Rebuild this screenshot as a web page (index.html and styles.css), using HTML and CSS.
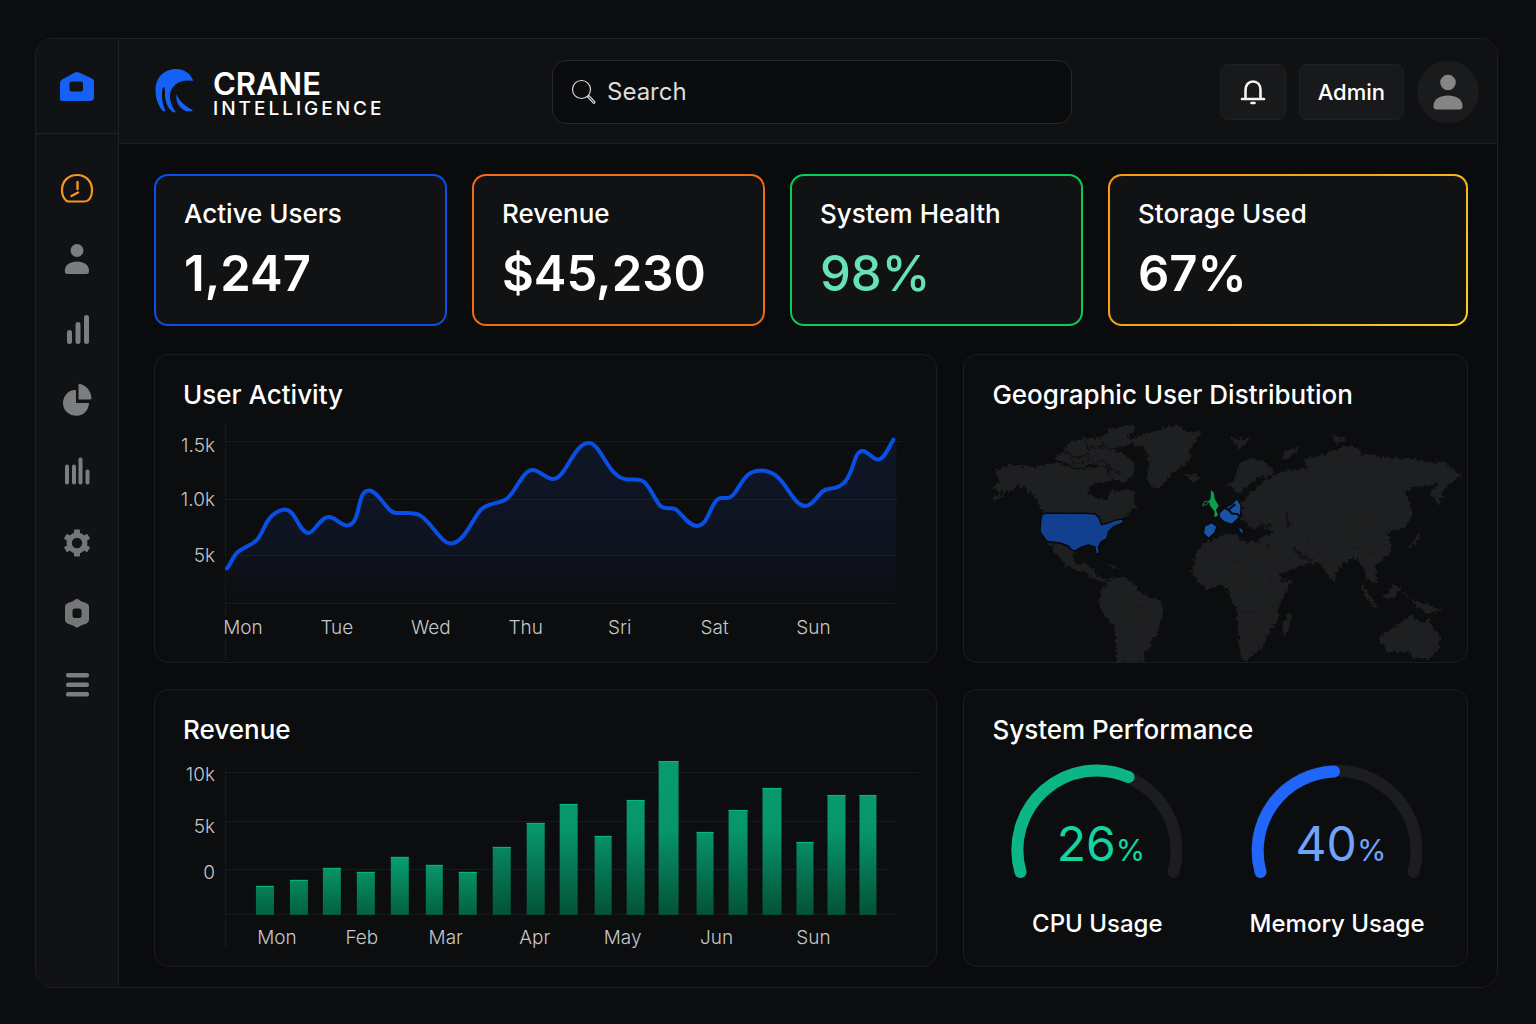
FILE: index.html
```html
<!DOCTYPE html>
<html lang="en">
<head>
<meta charset="utf-8">
<meta name="viewport" content="width=device-width, initial-scale=1">
<title>Crane Intelligence</title>
<link rel="stylesheet" href="styles.css">
</head>
<body>
<div class="shell">
  <aside class="sidebar">
    <a class="home" href="#" aria-label="Home">
      <svg width="36" height="32" viewBox="0 0 36 32"><path fill="#1560f5" fill-rule="evenodd" d="M1 13Q1 10.500 3 9.500L16 2.500Q18 1.500 20 2.500L33 8.500Q35 9.500 35 11.500V27Q35 31 31 31H3Q1 31 1 29ZM12.500 11.500Q10.500 11.500 10.500 13.500V19.500Q10.500 21.500 12.500 21.500H22Q24 21.500 24 19.500V13.500Q24 11.500 22 11.500Z"/></svg>
    </a>
    <nav class="nav" aria-label="Main">
      <a class="active" href="#" aria-label="Dashboard"><svg width="36" height="36" viewBox="0 0 36 36" fill="none" stroke="#f7931e" stroke-width="2.200" stroke-linecap="round" stroke-linejoin="round"><path d="M7.500 31Q3 27 3 20C3 11 9.500 5 18 5S33 11 33 20Q33 27 29.500 30Q28 31.500 25 31.500H11Q8.500 31.500 7.500 31Z"/><path d="M18.500 12V19M19 22.500L12.500 26" stroke-width="2.400"/></svg></a>
      <a href="#" aria-label="Users"><svg width="36" height="36" viewBox="0 0 36 36" fill="#7b7d7e"><circle cx="18" cy="9.500" r="6.500"/><path d="M5.800 30C5.800 24 11 20.500 18 20.500S30 24 30 30Q30 33 27.500 33H8.500Q5.800 33 5.800 30Z"/></svg></a>
      <a href="#" aria-label="Statistics"><svg width="36" height="36" viewBox="0 0 36 36" fill="#7b7d7e"><rect x="8" y="18" width="5" height="14" rx="2.500"/><rect x="16.500" y="10" width="5" height="22" rx="2.500"/><rect x="25" y="3" width="5" height="29" rx="2.500"/></svg></a>
      <a href="#" aria-label="Segments"><svg width="36" height="36" viewBox="0 0 36 36" fill="#7b7d7e"><path d="M17 7.500V20H30A13 13 0 1 1 15 7Q17 6.800 17 7.500Z"/><path d="M19.500 2Q19.500 .5 21 .8Q31 4 32.500 14.500Q33 16.500 31 16.500H19.500Z"/></svg></a>
      <a href="#" aria-label="Reports"><svg width="36" height="36" viewBox="0 0 36 36" fill="#7b7d7e"><rect x="6" y="10.500" width="4" height="20" rx="2"/><rect x="13" y="10.500" width="4" height="20" rx="2"/><rect x="19.500" y="3.500" width="4" height="27" rx="2"/><rect x="26.500" y="15.500" width="4" height="15" rx="2"/></svg></a>
      <a href="#" aria-label="Settings"><svg width="36" height="36" viewBox="0 0 36 36"><g fill="#747677"><circle cx="18" cy="18" r="10.500"/><rect x="15" y="4.500" width="6" height="27" rx="1"/><rect x="15" y="4.500" width="6" height="27" rx="1" transform="rotate(60 18 18)"/><rect x="15" y="4.500" width="6" height="27" rx="1" transform="rotate(120 18 18)"/></g><circle cx="18" cy="18" r="5.200" fill="#111315"/></svg></a>
      <a href="#" aria-label="Security"><svg width="36" height="36" viewBox="0 0 36 36"><path fill="#747677" fill-rule="evenodd" d="M16.500 3.300Q18 2.500 19.500 3.300L22 5.300L27 7Q30 8.200 30 11V23.500Q30 26.500 27 27.800L22 29.500L19.500 31Q18 32 16.500 31L14 29.500L9 27.800Q6 26.500 6 23.500V11Q6 8.200 9 7L14 5.300ZM16 12.500Q13.500 12.500 13.500 15V19.500Q13.500 22 16 22H20Q22.500 22 22.500 19.500V15Q22.500 12.500 20 12.500Z"/></svg></a>
      <a href="#" aria-label="Menu"><svg width="36" height="36" viewBox="0 0 36 36" fill="#7b7d7e"><rect x="7" y="6" width="23" height="4.500" rx="2"/><rect x="7" y="15.500" width="23" height="4.500" rx="2"/><rect x="7" y="25" width="23" height="4.500" rx="2"/></svg></a>
    </nav>
  </aside>

  <div class="main">
    <header class="topbar">
      <a class="brand" href="#">
        <svg width="40" height="50" viewBox="0 0 40 50"><path fill="#1560f5" d="M39.300 13.700C36 6 30 2 22 2C10 2 1.500 11 1.500 23C1.500 32 4.500 39 9 44.300H11.500C9 39 7.800 32 8 26Q8.300 19.500 10 20Q11 21 11 27C11 35 14 41.500 19 45.300H22C18 40 15.500 34 16 27.500C17 19.500 24 13.500 34 13.500ZM22.500 27C25 34 31 39 38.500 43V44.300H32C26 41.500 21.300 36 22.500 27Z"/></svg>
        <span class="brand-text"><span class="brand-name">CRANE</span><span class="brand-sub">INTELLIGENCE</span></span>
      </a>
      <label class="search">
        <svg width="26" height="26" viewBox="0 0 26 26" fill="none" stroke="#d8d9da" stroke-width="1.200"><circle cx="10.500" cy="10.500" r="9"/><path d="M16.500 17.800L22.500 24.200Q24 24.500 23.800 22.800L18 16.500Z"/></svg>
        <input type="search" placeholder="Search" aria-label="Search">
      </label>
      <div class="actions">
        <button class="btn bell" type="button" aria-label="Notifications">
          <svg width="28" height="28" viewBox="0 0 28 28" fill="none" stroke="#f4f4f4" stroke-width="2.600" stroke-linecap="round"><path d="M6.500 21V12C6.500 7 9.500 3.500 14 3.500S21.500 7 21.500 12V21M3 21H25"/><path d="M12.500 25H15.500" stroke-width="2.600"/></svg>
        </button>
        <button class="btn" type="button">Admin</button>
        <button class="avatar" type="button" aria-label="Profile">
          <svg width="36" height="40" viewBox="0 0 36 40" fill="#858585"><circle cx="18" cy="10.500" r="7.800"/><path d="M3.500 34C3.500 27 10 23.500 18 23.500S32.500 27 32.500 34Q32.500 37.500 29.500 37.500H6.500Q3.500 37.500 3.500 34Z"/></svg>
        </button>
      </div>
    </header>

    <main class="content">
      <section class="stats">
        <article class="stat blue"><h2>Active Users</h2><p>1,247</p></article>
        <article class="stat orange"><h2>Revenue</h2><p>$45,230</p></article>
        <article class="stat green"><h2>System Health</h2><p>98%</p></article>
        <article class="stat yellow"><h2>Storage Used</h2><p>67%</p></article>
      </section>

      <section class="panels">
        <article class="panel">
          <h2>User Activity</h2>
          <svg class="chart" viewBox="155 411 782 251" role="img" aria-label="User activity by day">
            <defs><linearGradient id="area" x1="0" y1="440" x2="0" y2="603" gradientUnits="userSpaceOnUse"><stop offset="0" stop-color="#1b3d8c" stop-opacity=".18"/><stop offset=".65" stop-color="#1b3d8c" stop-opacity=".14"/><stop offset="1" stop-color="#1b3d8c" stop-opacity="0"/></linearGradient></defs>
            <path class="grid-line" d="M225.500 424V617M225.500 640V661M226 441.500H902M226 499.500H898M226 555.500H897M226 603.500H896"/>
            <path fill="url(#area)" d="M227 568.500C231 564 233 556 238 552C244 547 251 546 257 540C264 532 265 521 273 515C277 512 280 509.500 285 509.500C296 509.500 299 533 308.500 533C315 533 320 517 329 517C336 517 340 525.500 347 525.500C362 525.500 356 490.500 369 490.500C379 490.500 387 513 396 513C405 514 414 511 421 516C433 524 441 543.500 451 543.500C465 543.500 473 517 482 509C490 502 498 505 507 499C516 492 523 470 533 470C540 470 546 479 553.500 479C566 479 574 443 589 443C602 443 608 479 628 479.500C638 480 643 477 650 489C656 498 659 508 666 508C670 509 673 507 677 510C683 515 689 526 697.500 526C710 526 711 498 722 498C729 498 731 499 736 492C744 480 747 470.500 762 470.500C786 470.500 791 506 806 506C815 506 820 489 829 489C838 488 843 486 847 480C855 468 855 451 863 451C869 451 873 460 879 459.500C885 459 889 448 894 439.500L897 439.500V603H227Z"/>
            <path fill="none" stroke="#0a4fe3" stroke-width="4" stroke-linecap="round" d="M227 568.500C231 564 233 556 238 552C244 547 251 546 257 540C264 532 265 521 273 515C277 512 280 509.500 285 509.500C296 509.500 299 533 308.500 533C315 533 320 517 329 517C336 517 340 525.500 347 525.500C362 525.500 356 490.500 369 490.500C379 490.500 387 513 396 513C405 514 414 511 421 516C433 524 441 543.500 451 543.500C465 543.500 473 517 482 509C490 502 498 505 507 499C516 492 523 470 533 470C540 470 546 479 553.500 479C566 479 574 443 589 443C602 443 608 479 628 479.500C638 480 643 477 650 489C656 498 659 508 666 508C670 509 673 507 677 510C683 515 689 526 697.500 526C710 526 711 498 722 498C729 498 731 499 736 492C744 480 747 470.500 762 470.500C786 470.500 791 506 806 506C815 506 820 489 829 489C838 488 843 486 847 480C855 468 855 451 863 451C869 451 873 460 879 459.500C885 459 889 448 894 439.500"/>
            <g class="ticks-y"><text x="215" y="452">1.5k</text><text x="215" y="506">1.0k</text><text x="215" y="562">5k</text></g>
            <g class="ticks-x"><text x="243" y="634">Mon</text><text x="337" y="634">Tue</text><text x="431" y="634">Wed</text><text x="526" y="634">Thu</text><text x="620" y="634">Sri</text><text x="715" y="634">Sat</text><text x="814" y="634">Sun</text></g>
          </svg>
        </article>

        <article class="panel">
          <h2>Geographic User Distribution</h2>
          <svg class="chart" viewBox="12 183 1506 753" role="img" aria-label="World map of users">
            <defs><filter id="coast" x="-5%" y="-5%" width="110%" height="110%" color-interpolation-filters="sRGB"><feTurbulence type="fractalNoise" baseFrequency=".09" numOctaves="3" seed="4"/><feDisplacementMap in="SourceGraphic" scale="24" xChannelSelector="R" yChannelSelector="G"/></filter></defs>
            <g fill="#1e1f20" filter="url(#coast)">
              <path d="M95 458L104 440L130 430L98 410L118 392L106 366L150 343L195 350L235 350L275 336L310 345L350 360L400 352L432 345L440 365L455 392L425 395L390 405L385 430L410 442L440 452L448 430L455 418L470 425L500 415L525 425L522 450L528 470L510 485L490 508L440 520L422 524L415 500L390 490L250 488L240 470L225 435L205 425L195 412L170 408L140 425L120 445Z"/>
              <path d="M285 325L310 300L330 275L370 265L420 262L450 240L490 228L530 228L520 245L500 255L515 275L490 290L450 295L490 310L525 345L520 375L490 400L455 385L440 350L400 340L360 355L320 340Z"/>
              <path d="M508 270L545 255L580 245L610 232L650 228L675 235L680 248L725 243L705 275L685 300L690 325L665 350L640 365L620 385L600 410L580 414L565 395L562 365L568 340L560 310L550 292L520 285Z"/>
              <path d="M665 372L690 374L715 378L718 388L695 392Z"/>
              <path d="M262 576L300 580L325 592L345 605L340 625L350 645L375 640L400 655L410 680L450 690L430 694L395 685L370 665L340 655L310 640L285 605ZM438 643L460 645L485 657L460 655Z"/>
              <path d="M452 685L490 682L520 700L535 725L570 742L607 755L605 800L590 855L570 870L575 890L555 905L550 936L470 936L468 880L462 830L430 790L415 755L425 715Z"/>
              <g transform="translate(750 0)">
                <path d="M-45 610L-20 580L45 552L75 550L95 575L165 575L180 600L195 640L215 690L245 688L225 730L200 775L205 800L180 840L160 885L120 920L95 936L85 880L80 790L60 735L40 705L-10 718L-35 700L-55 670Z"/>
                <path d="M45 405L75 385L85 350L110 325L150 330L190 355L185 375L150 380L120 400L90 430L70 425L65 410Z"/>
                <path d="M92 455L140 410L185 378L235 358L290 355L285 325L310 320L330 318L400 288L435 290L460 315L520 322L590 325L650 335L710 340L760 385L735 385L715 400L695 430L688 470L668 440L655 430L680 400L650 405L610 410L585 425L600 465L605 500L580 535L530 545L545 600L510 635L495 650L500 690L485 700L465 680L460 650L430 620L400 640L380 665L375 700L355 680L330 640L290 640L240 660L210 672L180 620L172 580L140 570L190 545L150 530L130 535L95 510Z"/>
                <path d="M60 262L85 270L120 262L108 282L90 296L75 285ZM215 325L235 295L268 292L250 308L235 325ZM355 255L385 258L410 270L380 280ZM590 585L612 568L625 545L632 565L600 590ZM450 700L480 735L505 775L485 765L460 735ZM520 740L550 705L572 710L550 745ZM575 715L590 740L650 765L700 780L650 790L610 760ZM235 785L245 795L230 850L215 855L220 820Z"/>
                <path d="M510 858L545 835L590 800L608 792L618 812L640 818L652 800L665 830L690 860L685 895L650 930L620 925L590 905L530 905L512 880Z"/>
              </g>
            </g>
            <g fill="none" stroke="#111214" filter="url(#coast)">
              <path stroke-width="5" d="M310 300L350 325L380 310L400 345L430 330L450 350M370 265L385 295L430 290L470 300M420 262L430 290M330 320L345 340L375 335M440 350L470 370L500 365"/>
              <path stroke-width="8" d="M978 488L985 530M1000 595L1030 625L1052 630M890 525L940 530"/>
              <path stroke-width="1.500" stroke-opacity=".7" d="M780 600L830 640L880 620M850 700L900 720L950 690M840 780L900 790L940 760M870 860L920 850M480 720L520 760L580 780M480 800L540 810M1020 560L1080 580L1130 540L1190 520L1260 530M1080 580L1100 620M1150 600L1200 590L1240 610M930 640L930 690"/>
            </g>
            <path fill="#10408f" stroke="#060708" stroke-width="4" d="M246 492L262 489L380 490L405 492L416 502L424 524L440 520L465 510L490 507L488 518L460 530L445 545L440 565L422 576L415 590L418 608L408 614L404 590L385 584L365 590L345 602L335 600L325 588L300 578L260 574L240 545L242 510Z"/>
            <g fill="#1853a6" stroke="#08090a" stroke-width="3">
              <path d="M733 528L755 518L770 530L762 548L745 564L730 550ZM778 488L795 472L815 462L830 446L842 466L840 498L815 522L790 514L778 502ZM836 528L850 542L846 552L836 540Z"/>
              <path fill="none" stroke-width="6" d="M785 468L805 480L815 490L832 492L840 502M805 478L825 462"/>
            </g>
            <g fill="#0aa04c"><path d="M752 420L760 428L764 448L775 467L767 480L773 496L762 501L763 484L750 468L746 456L751 444Z"/><path fill="none" stroke="#0a7a3e" stroke-width="3" d="M727 466L733 455L748 452L738 464Z"/></g>
          </svg>
        </article>

        <article class="panel">
          <h2>Revenue</h2>
          <svg class="chart" viewBox="155 747 782 220" role="img" aria-label="Revenue by month">
            <defs><linearGradient id="bar" x1="0" y1="760" x2="0" y2="916" gradientUnits="userSpaceOnUse"><stop offset="0" stop-color="#079c6c"/><stop offset=".45" stop-color="#07966a"/><stop offset="1" stop-color="#045238"/></linearGradient>
            <linearGradient id="bar-low" x1="0" y1="858" x2="0" y2="916" gradientUnits="userSpaceOnUse"><stop offset="0" stop-color="#07a070"/><stop offset="1" stop-color="#04613f"/></linearGradient></defs>
            <path class="grid-line" d="M225.500 768V950M226 773.500H920M226 822.500H898M226 870.500H888M226 915.500H898"/>
            <g fill="url(#bar-low)">
              <rect x="256" y="887" width="18" height="29"/><rect x="290" y="881" width="18" height="35"/><rect x="323" y="869" width="18" height="47"/><rect x="357" y="873" width="18" height="43"/><rect x="391" y="858" width="18" height="58"/><rect x="426" y="866" width="17" height="50"/><rect x="459" y="873" width="18" height="43"/>
            </g>
            <g fill="url(#bar)">
              <rect x="493" y="848" width="18" height="68"/><rect x="527" y="824" width="18" height="92"/><rect x="560" y="805" width="18" height="111"/><rect x="595" y="837" width="17" height="79"/><rect x="627" y="801" width="18" height="115"/><rect x="659" y="762" width="20" height="154"/><rect x="697" y="833" width="17" height="83"/><rect x="729" y="811" width="19" height="105"/><rect x="763" y="789" width="19" height="127"/><rect x="797" y="843" width="17" height="73"/><rect x="828" y="796" width="18" height="120"/><rect x="860" y="796" width="17" height="120"/>
            </g>
            <path stroke="#08b87e" d="M256 887.500h18M290 881.500h18M323 869.500h18M357 873.500h18M391 858.500h18M426 866.500h17M459 873.500h18M493 848.500h18M527 824.500h18M560 805.500h18M595 837.500h17M627 801.500h18M659 762.500h20M697 833.500h17M729 811.500h19M763 789.500h19M797 843.500h17M828 796.500h18M860 796.500h17"/>
            <g class="ticks-y"><text x="215" y="782">10k</text><text x="215" y="834">5k</text><text x="215" y="880">0</text></g>
            <g class="ticks-x"><text x="277" y="945">Mon</text><text x="362" y="945">Feb</text><text x="446" y="945">Mar</text><text x="535" y="945">Apr</text><text x="623" y="945">May</text><text x="717" y="945">Jun</text><text x="814" y="945">Sun</text></g>
          </svg>
        </article>

        <article class="panel">
          <h2>System Performance</h2>
          <div class="gauges">
            <figure class="gauge cpu">
              <svg width="172" height="120" viewBox="0 0 172 120"><path class="track" d="M9.500 109A79.500 79.500 0 1 1 162.500 109"/><path class="fill" d="M9.500 109A79.500 79.500 0 0 1 117.500 14"/><text x="90" y="98">26<tspan>%</tspan></text></svg>
              <figcaption>CPU Usage</figcaption>
            </figure>
            <figure class="gauge memory">
              <svg width="172" height="120" viewBox="0 0 172 120"><path class="track" d="M9.500 109A79.500 79.500 0 1 1 162.500 109"/><path class="fill" d="M9.500 109A79.500 79.500 0 0 1 83 8.500"/><text x="90" y="98">40<tspan>%</tspan></text></svg>
              <figcaption>Memory Usage</figcaption>
            </figure>
          </div>
        </article>
      </section>
    </main>
  </div>
</div>
</body>
</html>
```
FILE: styles.css
```css
* {
  box-sizing: border-box;
}

body {
  margin: 0;
  min-height: 100vh;
  padding: 38px 38px 36px 35px;
  display: flex;
  background: #0c0d0f;
  color: #fff;
  font-family: Inter, "Liberation Sans", sans-serif;
}

h2,
p,
figure {
  margin: 0;
}

svg {
  display: block;
}

.shell {
  flex: 1;
  display: flex;
  border: 1px solid #1f2021;
  border-radius: 18px;
  overflow: hidden;
}

.sidebar {
  flex: none;
  width: 83px;
  background: #111214;
  border-right: 1px solid #1f2021;
}

.home {
  height: 95px;
  display: flex;
  align-items: center;
  justify-content: center;
  border-bottom: 1px solid #222324;
}

.nav {
  padding-top: 36px;
  display: flex;
  flex-direction: column;
  align-items: center;
  gap: 35px;
}

.main {
  flex: 1;
  min-width: 0;
  background: #0a0b0d;
}

.topbar {
  height: 105px;
  padding: 1px 18px 0 35px;
  display: grid;
  grid-template-columns: 398fr 520fr 407fr;
  align-items: center;
  background: #101113;
  border-bottom: 1px solid #1d1e1f;
}

.brand {
  display: flex;
  align-items: center;
  gap: 19px;
  color: #fff;
  text-decoration: none;
}

.brand-text {
  padding-top: 6px;
  display: flex;
  flex-direction: column;
}

.brand-name {
  font-size: 31px;
  font-weight: 600;
  line-height: 28px;
}

.brand-sub {
  font-size: 19px;
  font-weight: 500;
  line-height: 22px;
  letter-spacing: 3px;
}

.search {
  height: 64px;
  padding: 0 18px;
  display: flex;
  align-items: center;
  gap: 10px;
  background: #0b0c0e;
  border: 1px solid #262728;
  border-radius: 14px;
}

.search input {
  flex: 1;
  min-width: 0;
  padding: 0;
  border: 0;
  outline: 0;
  background: none;
  color: #dcdddd;
  font: 400 24px/32px Inter, sans-serif;
}

.search input::placeholder {
  color: #dcdddd;
  opacity: 1;
}

.actions {
  display: flex;
  align-items: center;
  justify-content: flex-end;
  gap: 13px;
}

.btn {
  height: 56px;
  padding: 0 18px;
  background: #18191a;
  border: 1px solid #202122;
  border-radius: 8px;
  color: #fff;
  font: 500 22px/28px Inter, sans-serif;
}

.avatar {
  width: 62px;
  height: 62px;
  padding: 0;
  display: flex;
  align-items: center;
  justify-content: center;
  background: #1a1b1c;
  border: 0;
  border-radius: 50%;
}

.content {
  padding: 30px 29px 19px 35px;
}

.stats {
  display: grid;
  grid-template-columns: 293fr 293fr 293fr 360fr;
  gap: 25px;
  margin-bottom: 28px;
}

.stat {
  padding: 22px 28px 20px;
  border: 2px solid;
  border-radius: 14px;
  background: #111213;
}

.stat h2 {
  margin-bottom: 14px;
  font-size: 26px;
  font-weight: 500;
  line-height: 32px;
}

.stat p {
  font-size: 49px;
  font-weight: 600;
  line-height: 60px;
}

.blue {
  border-color: #0b50e8;
}

.orange {
  border-color: #f06c16;
}

.green {
  border-color: #06cc58;
}

.green p {
  color: #66e2b4;
  font-weight: 500;
}

.yellow {
  border-color: transparent;
  background: linear-gradient(#111213, #111213) padding-box, linear-gradient(135deg, #f99b12, #f5a812 50%, #f8d21c) border-box;
}

.panels {
  display: grid;
  grid-template-columns: 784fr 505fr;
  gap: 26px;
}

.panel {
  padding-top: 24px;
  background: #0c0d0f;
  border: 1px solid #1c1d1e;
  border-radius: 14px;
  overflow: hidden;
}

.panel h2 {
  padding: 0 28px;
  font-size: 26px;
  font-weight: 500;
  line-height: 32px;
}

.chart {
  width: 100%;
}

.grid-line {
  fill: none;
  stroke: #1b1c1d;
}

.ticks-x,
.ticks-y {
  fill: #c6c7c8;
  font-size: 19px;
  font-weight: 300;
}

.ticks-x {
  text-anchor: middle;
}

.ticks-y {
  text-anchor: end;
}

.gauges {
  padding: 17px 10px 0 13px;
  display: grid;
  grid-template-columns: 1fr 1fr;
}

.gauge {
  display: flex;
  flex-direction: column;
  align-items: center;
  gap: 25px;
}

.gauge path {
  fill: none;
  stroke-width: 12px;
  stroke-linecap: round;
}

.gauge .track {
  stroke: #1c1d1f;
}

.gauge text {
  font-size: 48px;
  text-anchor: middle;
}

.gauge tspan {
  font-size: 30px;
}

.cpu .fill {
  stroke: #0bb585;
}

.cpu text {
  fill: #11d6a0;
}

.memory .fill {
  stroke: #2166fb;
}

.memory text {
  fill: #70a3f9;
}

.gauge figcaption {
  font-size: 24px;
  font-weight: 500;
  line-height: 32px;
}
```
